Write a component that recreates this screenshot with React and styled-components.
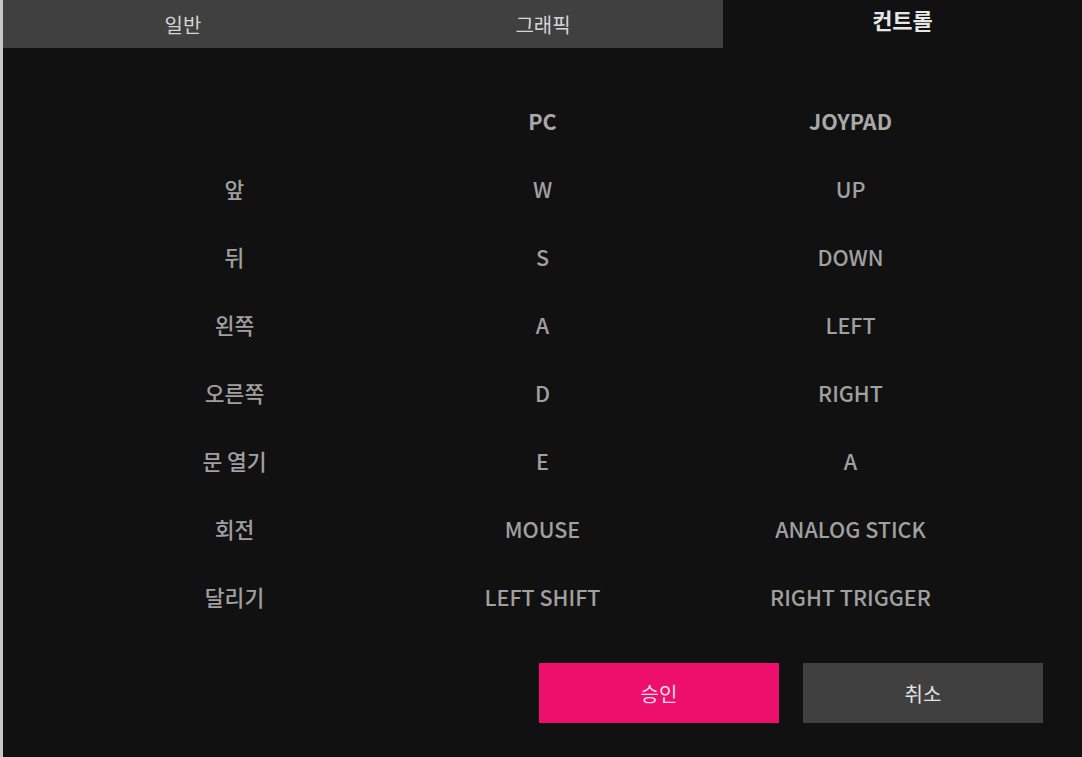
import React, { useState } from "react";
import styled, { createGlobalStyle } from "styled-components";

const Global = createGlobalStyle`
  html, body { margin: 0; padding: 0; background: #c8c8c8; }
  body { font-family: "Noto Sans CJK KR", "Noto Sans", sans-serif; }
  * { box-sizing: border-box; }
`;

const Panel = styled.div`
  margin-left: 3px;
  height: 757px;
  background: #111111;
  display: flex;
  flex-direction: column;
`;

const Tabs = styled.div`
  display: grid;
  grid-template-columns: 360px 360px 1fr;
  height: 48px;
`;

const Tab = styled.button`
  border: none;
  margin: 0;
  padding: 0;
  background: ${(p) => (p.$active ? "#111111" : "#404040")};
  color: ${(p) => (p.$active ? "#e6e6e6" : "#d6d6d6")};
  font-family: inherit;
  font-size: ${(p) => (p.$active ? "22px" : "20px")};
  font-weight: ${(p) => (p.$active ? 700 : 400)};
  display: flex;
  justify-content: center;
  align-items: ${(p) => (p.$active ? "flex-start" : "center")};
  padding-top: ${(p) => (p.$active ? "3px" : "0")};
  cursor: pointer;
`;

const Table = styled.div`
  width: 924px;
  margin: 38px auto 0;
  display: grid;
  grid-template-columns: repeat(3, 1fr);
  grid-auto-rows: 68px;
`;

const Cell = styled.div`
  display: flex;
  align-items: center;
  justify-content: center;
  font-size: 21.5px;
  color: ${(p) => (p.$head ? "#a8a8a8" : "#a0a0a0")};
  font-weight: ${(p) => (p.$head ? 700 : 500)};
`;

const Actions = styled.div`
  display: flex;
  justify-content: flex-end;
  gap: 24px;
  padding: 33px 39px 0 0;
`;

const Button = styled.button`
  width: 240px;
  height: 60px;
  border: none;
  background: ${(p) => (p.$primary ? "#ee0e6c" : "#404040")};
  color: ${(p) => (p.$primary ? "#f4dce6" : "#e2e2e2")};
  font-family: inherit;
  font-size: 20px;
  font-weight: 400;
  cursor: pointer;
`;

const rows = [
  ["앞", "W", "UP"],
  ["뒤", "S", "DOWN"],
  ["왼쪽", "A", "LEFT"],
  ["오른쪽", "D", "RIGHT"],
  ["문 열기", "E", "A"],
  ["회전", "MOUSE", "ANALOG STICK"],
  ["달리기", "LEFT SHIFT", "RIGHT TRIGGER"],
];

export default function App() {
  const [tab, setTab] = useState(2);
  const tabs = ["일반", "그래픽", "컨트롤"];
  return (
    <>
      <Global />
      <Panel>
        <Tabs>
          {tabs.map((t, i) => (
            <Tab key={t} $active={tab === i} onClick={() => setTab(i)}>
              {t}
            </Tab>
          ))}
        </Tabs>
        <Table>
          <Cell $head />
          <Cell $head>PC</Cell>
          <Cell $head>JOYPAD</Cell>
          {rows.map((r) =>
            r.map((c, j) => <Cell key={r[0] + j}>{c}</Cell>)
          )}
        </Table>
        <Actions>
          <Button $primary>승인</Button>
          <Button>취소</Button>
        </Actions>
      </Panel>
    </>
  );
}
